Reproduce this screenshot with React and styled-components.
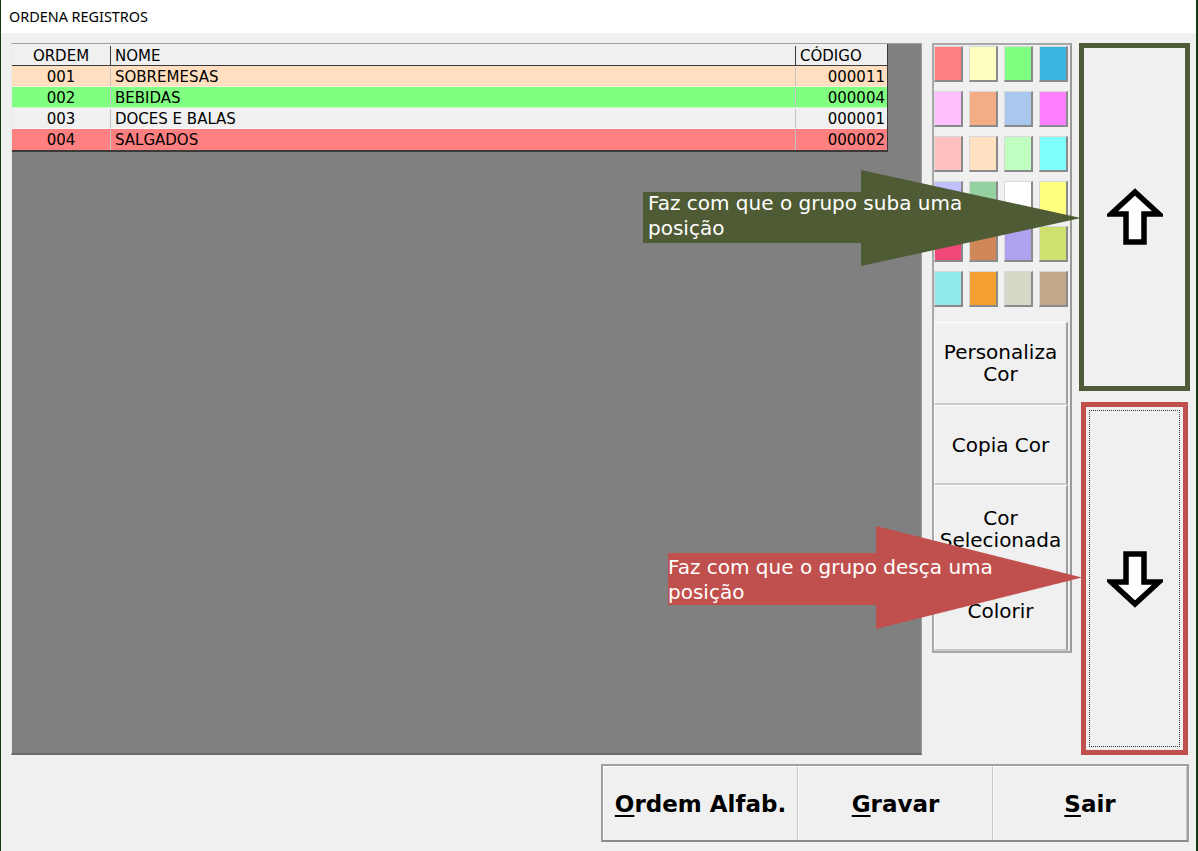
import React from 'react';
import styled, { createGlobalStyle } from 'styled-components';

const GlobalStyle = createGlobalStyle`
  html, body {
    margin: 0;
    padding: 0;
    background: #f0f0f0;
  }
  * {
    box-sizing: border-box;
  }
`;

const Window = styled.div`
  position: relative;
  width: 1198px;
  height: 851px;
  display: flex;
  flex-direction: column;
  background: #f0f0f0;
  border-left: 1px solid #123a12;
  border-right: 2px solid #123a12;
  overflow: hidden;
  font-family: 'DejaVu Sans', Verdana, sans-serif;
  color: #000;
`;

const TitleBar = styled.div`
  height: 33px;
  background: #fff;
  display: flex;
  align-items: center;
  padding-left: 8px;
  font-family: 'Noto Sans', 'Open Sans', sans-serif;
  font-size: 14.4px;
  color: #000;
`;

const Body = styled.div`
  display: flex;
  padding: 10px 0 0 10px;
  gap: 10px;
`;

const GridPanel = styled.div`
  width: 911px;
  height: 712px;
  background: #808080;
  border-top: 1px solid #a0a0a0;
  border-left: 1px solid #e8e8e8;
  border-right: 1px solid #a0a0a0;
  border-bottom: 2px solid #6a6a6a;
`;

const Table = styled.div`
  width: 876px;
  border-right: 1px solid #3a3a3a;
  border-bottom: 2px solid #3a3a3a;
  font-size: 15px;
`;

const Row = styled.div`
  display: grid;
  grid-template-columns: 99px 685px 1fr;
  height: ${p => (p.$head ? 22 : 21)}px;
  padding-top: ${p => (p.$head ? 2 : 1)}px;
  background: ${p => p.$bg || '#f0f0f0'};
  border-bottom: 1px solid ${p => (p.$head ? '#3a3a3a' : 'rgba(255,255,255,0.55)')};
  &:last-child {
    border-bottom: none;
  }
`;

const Cell = styled.div`
  display: flex;
  align-items: center;
  justify-content: ${p => p.$align || 'flex-start'};
  padding: 0 ${p => (p.$align === 'flex-end' ? '2px' : '4px')};
  border-right: 1px solid ${p => (p.$head ? '#3a3a3a' : '#c4c4c4')};
  white-space: nowrap;
  overflow: hidden;
  &:last-child {
    border-right: none;
  }
`;

const PalettePanel = styled.div`
  width: 140px;
  height: 610px;
  border: 2px solid #a8a8a8;
  border-right-color: #9a9a9a;
  padding: 1px 0 0 0;
  display: flex;
  flex-direction: column;
`;

const Swatches = styled.div`
  display: grid;
  grid-template-columns: repeat(4, 29px);
  grid-auto-rows: 36px;
  column-gap: 6px;
  row-gap: 9px;
`;

const Swatch = styled.div`
  background: ${p => p.$color};
  border-top: 1px solid #d8d8d8;
  border-left: 1px solid #d8d8d8;
  border-right: 2px solid #8a8a8a;
  border-bottom: 2px solid #8a8a8a;
`;

const ToolButtons = styled.div`
  margin-top: 15px;
  width: 134px;
  display: flex;
  flex-direction: column;
`;

const ToolButton = styled.div`
  height: ${p => p.$h}px;
  display: flex;
  flex-direction: column;
  align-items: center;
  justify-content: center;
  gap: ${p => p.$gap || 0}px;
  padding-bottom: ${p => p.$pb || 0}px;
  text-align: center;
  font-size: 20px;
  line-height: 22px;
  background: #f0f0f0;
  border-top: 1px solid #fff;
  border-left: 1px solid #fff;
  border-right: 2px solid #a0a0a0;
  border-bottom: 2px solid #c8c8c8;
`;

const MoveColumn = styled.div`
  width: 111px;
  margin-left: -3px;
  display: flex;
  flex-direction: column;
  gap: 11px;
`;

const MoveButton = styled.div`
  height: ${p => p.$h}px;
  margin: 0 ${p => p.$inset || 0}px;
  border: 5px solid ${p => p.$frame};
  background: #f0f0f0;
  padding: 3px;
  display: flex;
`;

const FocusRing = styled.div`
  flex: 1;
  display: flex;
  align-items: center;
  justify-content: center;
  border: 1px dotted ${p => (p.$on ? '#333' : 'transparent')};
`;

const Footer = styled.div`
  display: flex;
  justify-content: flex-end;
  padding: 9px 7px 0 0;
`;

const ButtonBar = styled.div`
  width: 588px;
  height: 78px;
  display: grid;
  grid-template-columns: 195px 195px 1fr;
  border: 2px solid #a0a0a0;
  border-bottom-color: #8a8a8a;
`;

const BarButton = styled.div`
  display: flex;
  align-items: center;
  justify-content: center;
  font-weight: bold;
  font-size: 23px;
  background: #f0f0f0;
  border-top: 1px solid #fff;
  border-left: 1px solid #fff;
  border-right: 1px solid #c4c4c4;
  u {
    text-decoration-thickness: 2px;
    text-underline-offset: 3px;
  }
`;

const Callout = styled.div`
  position: absolute;
  left: ${p => p.$x}px;
  top: ${p => p.$y}px;
  width: ${p => p.$w}px;
  height: ${p => p.$h}px;
  pointer-events: none;
  svg {
    display: block;
  }
`;

const CalloutText = styled.div`
  position: absolute;
  left: ${p => p.$tx}px;
  top: ${p => p.$ty}px;
  color: #fff;
  font-size: 20px;
  line-height: 25px;
  white-space: nowrap;
`;

const rows = [
  { ordem: '001', nome: 'SOBREMESAS', codigo: '000011', bg: '#ffdfbf' },
  { ordem: '002', nome: 'BEBIDAS', codigo: '000004', bg: '#80ff80' },
  { ordem: '003', nome: 'DOCES E BALAS', codigo: '000001', bg: '#f0f0f0' },
  { ordem: '004', nome: 'SALGADOS', codigo: '000002', bg: '#ff8080' },
];

const colors = [
  '#ff8080', '#ffffc0', '#80ff80', '#3cb4e0',
  '#ffc0ff', '#f4ac84', '#a8c8ee', '#ff80ff',
  '#ffc0c0', '#ffe0c0', '#c0ffc0', '#80ffff',
  '#c0c0ff', '#94d0a0', '#ffffff', '#ffff80',
  '#f04878', '#d08858', '#b0a0f0', '#d0e070',
  '#90e8e8', '#f4a030', '#d8d8c8', '#c0a888',
];

const ArrowIcon = ({ down }) => (
  <svg width="56" height="58" viewBox="0 0 56 58" style={down ? { transform: 'scaleY(-1)' } : undefined}>
    <polygon
      points="28,4 52,26 37,26 37,54 19,54 19,26 4,26"
      fill="#fff"
      stroke="#000"
      strokeWidth="5.5"
      strokeLinejoin="miter"
    />
  </svg>
);

const ArrowShape = ({ w, h, rectX, rectY, rectH, color }) => (
  <svg width={w} height={h} viewBox={`0 0 ${w} ${h}`}>
    <polygon
      points={`0,${rectY} ${rectX},${rectY} ${rectX},0 ${w},${h / 2} ${rectX},${h} ${rectX},${rectY + rectH} 0,${rectY + rectH}`}
      fill={color}
    />
  </svg>
);

const App = () => {
  return (
    <>
      <GlobalStyle />
      <Window>
        <TitleBar>ORDENA REGISTROS</TitleBar>
        <Body>
          <GridPanel>
            <Table>
              <Row $head>
                <Cell $head $align="center">ORDEM</Cell>
                <Cell $head>NOME</Cell>
                <Cell $head>CÓDIGO</Cell>
              </Row>
              {rows.map(r => (
                <Row key={r.ordem} $bg={r.bg}>
                  <Cell $align="center">{r.ordem}</Cell>
                  <Cell>{r.nome}</Cell>
                  <Cell $align="flex-end">{r.codigo}</Cell>
                </Row>
              ))}
            </Table>
          </GridPanel>

          <PalettePanel>
            <Swatches>
              {colors.map((c, i) => (
                <Swatch key={i} $color={c} />
              ))}
            </Swatches>
            <ToolButtons>
              <ToolButton $h={83}>
                <span>Personaliza</span>
                <span>Cor</span>
              </ToolButton>
              <ToolButton $h={80}>Copia Cor</ToolButton>
              <ToolButton $h={166} $gap={49} $pb={6}>
                <div>
                  <div>Cor</div>
                  <div>Selecionada</div>
                </div>
                <div>Colorir</div>
              </ToolButton>
            </ToolButtons>
          </PalettePanel>

          <MoveColumn>
            <MoveButton $h={348} $frame="#4f5a38">
              <FocusRing>
                <ArrowIcon />
              </FocusRing>
            </MoveButton>
            <MoveButton $h={353} $frame="#c0504d" $inset={2}>
              <FocusRing $on>
                <ArrowIcon down />
              </FocusRing>
            </MoveButton>
          </MoveColumn>
        </Body>

        <Footer>
          <ButtonBar>
            <BarButton><span><u>O</u>rdem Alfab.</span></BarButton>
            <BarButton><span><u>G</u>ravar</span></BarButton>
            <BarButton><span><u>S</u>air</span></BarButton>
          </ButtonBar>
        </Footer>

        <Callout $x={642} $y={170} $w={438} $h={96}>
          <ArrowShape w={438} h={96} rectX={218} rectY={22} rectH={51} color="#4f5b35" />
          <CalloutText $tx={5} $ty={21}>
            Faz com que o grupo suba uma<br />posição
          </CalloutText>
        </Callout>

        <Callout $x={667} $y={526} $w={414} $h={103}>
          <ArrowShape w={414} h={103} rectX={208} rectY={27} rectH={52} color="#c0504d" />
          <CalloutText $tx={0} $ty={29}>
            Faz com que o grupo desça uma<br />posição
          </CalloutText>
        </Callout>
      </Window>
    </>
  );
};

export default App;
